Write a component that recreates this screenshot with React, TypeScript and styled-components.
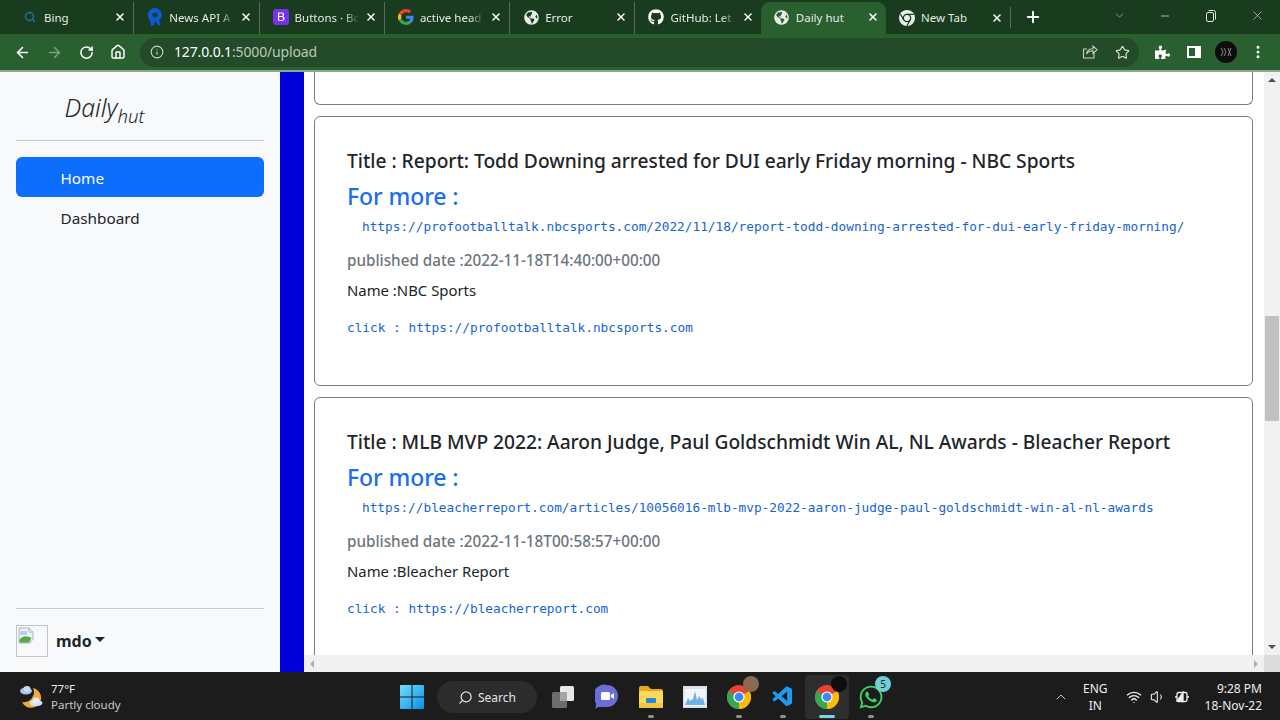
import React from "react";
import styled, { createGlobalStyle } from "styled-components";
import { ArrowLeft, ArrowRight, RotateCw, Home, Info, Star, X, Plus, ChevronDown, Minus, Search, ChevronUp, Wifi, Volume1, MoreVertical } from "lucide-react";
import { FaGithub, FaGlobeAmericas, FaPuzzlePiece, FaWhatsapp } from "react-icons/fa";
import { VscVscode } from "react-icons/vsc";

const Global = createGlobalStyle`
  html, body { margin: 0; padding: 0; width: 1280px; height: 720px; overflow: hidden; background: #fff; }
  * { box-sizing: border-box; }
  body { font-family: "Noto Sans", "Open Sans", sans-serif; }
`;

const Screen = styled.div`
  width: 1280px; height: 720px; display: flex; flex-direction: column; overflow: hidden;
`;
const TabStrip = styled.div`
  height: 34px; flex: none; background: #193b1e; display: flex; align-items: flex-end; padding-left: 9px; color: #fff;
`;
const Tab = styled.div<{ $active?: boolean }>`
  width: 125.3px; height: 32px; display: flex; align-items: center; padding: 0 7px 2px 13px; gap: 6px;
  font-size: 11.5px; color: #e4ebe4;
  background: ${p => (p.$active ? "#2a5f2f" : "transparent")};
  border-radius: ${p => (p.$active ? "9px 9px 0 0" : "0")};
  border-right: ${p => (p.$active ? "none" : "1px solid #54705a")};
  white-space: nowrap;
`;
const TabLast = styled(Tab)`
  height: 21px; margin-bottom: 6px; padding-bottom: 0;
`;
const TabPlain = styled(Tab)`
  border-right: none;
`;
const TabIcon = styled.span`
  width: 16px; height: 16px; flex: none; display: flex; align-items: center; justify-content: center;
`;
const TabTitle = styled.span<{ $fade?: boolean }>`
  flex: 1; min-width: 0; overflow: hidden; white-space: nowrap;
  ${p => p.$fade ? "-webkit-mask-image: linear-gradient(90deg,#000 78%,transparent 100%); mask-image: linear-gradient(90deg,#000 78%,transparent 100%);" : ""}
`;
const NewTab = styled.div`
  width: 44px; height: 32px; display: flex; align-items: center; justify-content: center; padding-bottom: 2px;
`;
const WindowControls = styled.div`
  margin-left: auto; height: 32px; display: flex; align-items: center; color: #dfe6df; padding-bottom: 5px;
`;
const WinBtn = styled.div`
  width: 46px; height: 30px; display: flex; align-items: center; justify-content: center;
`;
const Toolbar = styled.div`
  height: 36px; flex: none; background: #2a5f2f; display: flex; align-items: center; padding: 0 6px; color: #fff;
`;
const ToolBtn = styled.div<{ $dim?: boolean }>`
  width: 32px; height: 32px; display: flex; align-items: center; justify-content: center; flex: none;
  color: ${p => (p.$dim ? "#7f9f83" : "#fff")};
`;
const AddressBar = styled.div`
  flex: 1; height: 29px; margin: 0 7px 0 6px; border-radius: 15px; background: #234a29; display: flex; align-items: center; padding: 0 1px 0 8px;
`;
const UrlIcon = styled.div`
  width: 18px; display: flex; justify-content: center; color: #c5d2c6; margin-right: 8px;
`;
const Url = styled.div`
  flex: 1; font-size: 14px; color: #b9c9bb; letter-spacing: -0.15px; padding-bottom: 1px;
  b { font-weight: 400; color: #fff; }
`;
const ToolLine = styled.div`
  height: 2px; flex: none; background: #8aa88d;
`;
const Main = styled.div`
  flex: none; height: 600px; display: flex; overflow: hidden; background: #fff;
`;
const Sidebar = styled.aside`
  width: 280px; flex: none; background: #f8f9fa; padding: 0 16px 15px; display: flex; flex-direction: column; color: #212529;
`;
const Brand = styled.div`
  padding: 19px 0 0 48.5px; height: 69px; font-size: 24.8px; font-style: italic; font-weight: 300; line-height: 32px; border-bottom: 1.5px solid #c9cbcd;
  sub { font-size: 18.6px; vertical-align: -6px; line-height: 0; }
`;
const NavList = styled.nav`
  margin-top: 16px; display: flex; flex-direction: column;
`;
const NavItem = styled.div<{ $active?: boolean }>`
  height: 40px; border-radius: 6px; padding: 2px 0 0 44.5px; display: flex; align-items: center; font-size: 15.3px;
  background: ${p => (p.$active ? "#0d6efd" : "transparent")};
  color: ${p => (p.$active ? "#fff" : "#212529")};
`;
const SidebarFoot = styled.div`
  margin-top: auto; border-top: 1.5px solid #c9cbcd; padding-top: 16px; display: flex; align-items: center;
`;
const Avatar = styled.div`
  width: 32px; height: 32px; border: 1px solid #c4c4c4; margin-right: 8px; padding: 1px; display: flex; align-items: flex-start;
`;
const UserName = styled.div`
  font-weight: 700; font-size: 16px; display: flex; align-items: center; gap: 3px;
`;
const Caret = styled.span`
  width: 0; height: 0; border-left: 5.500px solid transparent; border-right: 5.500px solid transparent; border-top: 5.500px solid #212529; margin-bottom: 3px;
`;
const BlueBar = styled.div`
  width: 24px; flex: none; background: #0000d6;
`;
const ViewportCol = styled.div`
  flex: 1; min-width: 0; display: flex; flex-direction: column;
`;
const ViewportRow = styled.div`
  flex: 1; min-height: 0; display: flex;
`;
const Content = styled.main`
  flex: 1; min-width: 0; overflow: hidden; padding: 0 11px 0 10px; display: flex; flex-direction: column; gap: 10.5px;
`;
const CardStub = styled.div`
  height: 33px; flex: none; border: 1.5px solid #7d7d7d; border-top: none; border-radius: 0 0 6px 6px;
`;
const Card = styled.article`
  flex: none; border: 1.5px solid #7d7d7d; border-radius: 6px; padding: 32px 32px 49.5px; color: #212529;
`;
const Title = styled.h5`
  margin: 0; font-size: 19.2px; font-weight: 500; line-height: 24px; letter-spacing: -0.01px; white-space: nowrap;
`;
const More = styled.h4`
  margin: 9px 0 0; font-size: 23px; font-weight: 500; line-height: 29px; color: #1a6df0; letter-spacing: -0.1px;
`;
const MonoLink = styled.code`
  display: block; font-family: "DejaVu Sans Mono", "Liberation Mono", monospace; font-size: 12.78px; line-height: 17px; color: #1663d8; white-space: pre;
`;
const Href = styled(MonoLink)`
  margin: 7px 0 0 15px;
`;
const Published = styled.h6`
  margin: 13px 0 0; font-size: 15.25px; font-weight: 500; line-height: 24px; color: #6c757d;
`;
const Name = styled.p`
  margin: 6px 0 0; font-size: 14.9px; line-height: 24px; color: #212529;
`;
const Click = styled(MonoLink)`
  margin-top: 17px;
`;
const VScroll = styled.div`
  width: 16px; flex: none; background: #f1f1f1; display: flex; flex-direction: column; align-items: center;
`;
const Thumb = styled.div`
  width: 14px; height: 105px; margin-top: 244px; background: #c1c1c1; flex: none;
`;
const Arrow = styled.span<{ $dir: "up" | "down" | "left" | "right"; $dim?: boolean }>`
  width: 0; height: 0; flex: none;
  ${p => {
    const c = p.$dim ? "#b0b0b0" : "#505050";
    if (p.$dir === "up") return `border-left:4px solid transparent;border-right:4px solid transparent;border-bottom:4px solid ${c};`;
    if (p.$dir === "down") return `border-left:4px solid transparent;border-right:4px solid transparent;border-top:4px solid ${c};`;
    if (p.$dir === "left") return `border-top:4px solid transparent;border-bottom:4px solid transparent;border-right:4px solid ${c};`;
    return `border-top:4px solid transparent;border-bottom:4px solid transparent;border-left:4px solid ${c};`;
  }}
`;
const VUp = styled.div`
  height: 16px; flex: none; display: flex; align-items: center; justify-content: center; margin-bottom: -16px; width: 100%;
`;
const VDown = styled.div`
  height: 17px; margin-top: auto; display: flex; align-items: center; justify-content: center; width: 100%;
`;
const HScroll = styled.div`
  height: 17px; flex: none; background: #f1f1f1; display: flex; align-items: center;
`;
const HArrow = styled.div`
  width: 16px; height: 17px; display: flex; align-items: center; justify-content: center;
`;
const HSpacer = styled.div`
  flex: 1;
`;
const Corner = styled.div`
  width: 16px; height: 17px; background: #dcdcdc;
`;
const Taskbar = styled.footer`
  height: 48px; flex: none; background: #1c1c1c; color: #fff; display: flex; align-items: center; padding-top: 2px;
`;
const Weather = styled.div`
  width: 390px; flex: none; display: flex; align-items: center; padding-left: 19px; gap: 6px;
`;
const WeatherText = styled.div`
  font-size: 11.5px; line-height: 16px; color: #e8e8e8;
  span { display: block; color: #c8c8c8; }
`;
const TaskBtn = styled.div<{ $active?: boolean }>`
  width: 44px; height: 44px; flex: none; display: flex; align-items: center; justify-content: center; position: relative; border-radius: 4px;
  background: ${p => (p.$active ? "#2e2e2e" : "transparent")};
`;
const TaskPill = styled.div<{ $active?: boolean }>`
  position: absolute; bottom: 1px; left: 50%; transform: translateX(-50%); height: 3px; border-radius: 2px;
  width: ${p => (p.$active ? 16 : 6)}px; background: ${p => (p.$active ? "#76d6e8" : "#8e8e8e")};
`;
const SearchPill = styled.div`
  width: 100px; height: 32px; border-radius: 16px; background: #2c2c2c; margin: 0 4px 0 3px; display: flex; align-items: center; justify-content: center; gap: 5px;
  font-size: 12px; color: #e4e4e4; flex: none;
`;
const SearchGlyph = styled(Search)`
  transform: scaleX(-1);
`;
const Badge = styled.span<{ $bg: string; $color?: string }>`
  position: absolute; top: 1px; right: 2px; width: 16px; height: 16px; border-radius: 50%; background: ${p => p.$bg}; color: ${p => p.$color || "#222"};
  font-size: 10px; display: flex; align-items: center; justify-content: center; overflow: hidden;
`;
const Tray = styled.div`
  flex: 1; display: flex; align-items: center; justify-content: flex-end; padding-right: 18px; color: #f0f0f0;
`;
const TrayLang = styled.div`
  font-size: 12px; line-height: 17px; text-align: center; margin: 0 18px 0 14px; color: #eee;
`;
const TrayIcons = styled.div`
  display: flex; align-items: center; gap: 8px; margin-right: 15px;
`;
const Clock = styled.div`
  font-size: 12px; line-height: 17px; text-align: right; color: #eee;
`;

const Chrome = ({ size = 16 }: { size?: number }) => (
  <svg width={size} height={size} viewBox="0 0 24 24">
    <circle cx="12" cy="12" r="12" fill="#ea4335" />
    <path d="M12 12 L22.400 6 A12 12 0 0 1 12 24 Z" fill="#fbbc04" />
    <path d="M12 12 L12 24 A12 12 0 0 1 1.600 6 Z" fill="#34a853" />
    <circle cx="12" cy="12" r="5.600" fill="#fff" />
    <circle cx="12" cy="12" r="4.400" fill="#4285f4" />
  </svg>
);
const ChromeMono = () => (
  <svg width="16" height="16" viewBox="0 0 24 24">
    <circle cx="12" cy="12" r="12" fill="#e8eee8" />
    <circle cx="12" cy="12" r="6.500" fill="#193b1e" />
    <circle cx="12" cy="12" r="4.500" fill="#e8eee8" />
    <path d="M12 6.500h10M7.200 15l-5-8.600M16.800 15l-5 8.600" stroke="#193b1e" strokeWidth="1.800" fill="none" />
  </svg>
);
const GoogleG = () => (
  <svg width="16" height="16" viewBox="0 0 48 48">
    <path fill="#EA4335" d="M24 9.500c3.500 0 6.700 1.200 9.200 3.600l6.900-6.900C35.900 2.400 30.500 0 24 0 14.600 0 6.500 5.400 2.600 13.200l8 6.200C12.400 13.700 17.700 9.500 24 9.500z" />
    <path fill="#4285F4" d="M47 24.500c0-1.600-.1-3.100-.4-4.500H24v9h12.900c-.6 3-2.200 5.500-4.800 7.200l7.700 6C44.400 38 47 31.800 47 24.500z" />
    <path fill="#FBBC05" d="M10.500 28.600a14.500 14.500 0 0 1 0-9.200l-8-6.200a24 24 0 0 0 0 21.600l8-6.200z" />
    <path fill="#34A853" d="M24 48c6.500 0 11.900-2.100 15.900-5.800l-7.700-6c-2.200 1.500-4.900 2.300-8.200 2.300-6.300 0-11.600-4.200-13.500-9.900l-8 6.200C6.500 42.600 14.600 48 24 48z" />
  </svg>
);
const NewsLogo = () => (
  <svg width="16" height="20" viewBox="0 0 16 20">
    <path d="M8 1a7 7 0 0 0-5 12l1 5c.3 1.400 2.600 1.400 3-.2L7.500 15H9l2 3c1 1 3 0 2.500-1.500L12 13.500A7 7 0 0 0 8 1z" fill="#0b5ad9" />
    <circle cx="8" cy="8" r="2.600" fill="#193b1e" />
  </svg>
);
const BootstrapLogo = () => (
  <svg width="16" height="16" viewBox="0 0 16 16">
    <rect width="16" height="16" rx="3" fill="#7b2ff0" />
    <path d="M5 3.500h3.700c1.500 0 2.400.8 2.400 2 0 .9-.6 1.600-1.400 1.800 1.100.1 1.900.9 1.900 2.100 0 1.400-1 2.300-2.800 2.300H5zm1.200 1v2.600h1.900c1.100 0 1.700-.5 1.700-1.300s-.5-1.300-1.500-1.300zm0 3.500v3h2.200c1.200 0 1.800-.5 1.800-1.500s-.7-1.500-2-1.500z" fill="#fff" />
  </svg>
);
const BingMark = () => <Search size={12} color="#1d6fa8" strokeWidth={3} />;
const PanelIcon = () => (
  <svg width="16" height="16" viewBox="0 0 16 16"><path fillRule="evenodd" d="M1 2h14v12H1zM3 4v8h6V4z" fill="#fff" /></svg>
);
const ShareIcon = () => (
  <svg width="16" height="16" viewBox="0 0 16 16" fill="none" stroke="#c5d2c6" strokeWidth="1.100">
    <path d="M12 9v5H1.500V5H5" />
    <path d="M4.500 10c.5-3.500 3-5.300 6.500-5.300V2l4 3.700-4 3.700V6.800c-2.800 0-5 1-6.500 3.200z" />
  </svg>
);
const Restore = () => (
  <svg width="12" height="14" viewBox="0 0 12 14" fill="none" stroke="#dfe6df"><rect x="1.500" y="3.500" width="7" height="9" rx="1.500" /><path d="M3.500 1.500h5a2 2 0 0 1 2 2v7" /></svg>
);
const BrokenImage = () => (
  <svg width="17" height="17" viewBox="0 0 17 17">
    <path d="M1 1h10l4 4v7l-3 4H1z" fill="#eef3fb" stroke="#a9b4c4" />
    <path d="M11 1v4h4z" fill="#fff" stroke="#a9b4c4" />
    <path d="M2 4h7v4H2z" fill="#b7cdf2" />
    <path d="M1.500 15.500 v-3 q4-5 10-2.500 l2 1-2.500 4.500z" fill="#5aa845" />
  </svg>
);
const WeatherIcon = () => (
  <svg width="26" height="26" viewBox="0 0 26 26">
    <path d="M14 4a10 10 0 1 1-11 14 10 10 0 0 0 11-14z" fill="#f2a93b" />
    <ellipse cx="7" cy="7" rx="6" ry="3.500" fill="#a9c6e8" />
    <ellipse cx="8" cy="5" rx="3.500" ry="3" fill="#c7dcf2" />
    <ellipse cx="17" cy="19" rx="6.500" ry="3.300" fill="#cfe0f2" />
    <ellipse cx="17" cy="16.500" rx="3.500" ry="3" fill="#e2edf7" />
  </svg>
);
const WinLogo = () => (
  <svg width="24" height="24" viewBox="0 0 24 24">
    <defs><linearGradient id="w" x1="0" y1="0" x2="1" y2="1"><stop offset="0" stopColor="#6fe0fb" /><stop offset="1" stopColor="#0a8fe8" /></linearGradient></defs>
    <path fill="url(#w)" d="M0 1a1 1 0 0 1 1-1h10.500v11.500H0zM12.500 0H23a1 1 0 0 1 1 1v10.500H12.500zM0 12.500h11.500V24H1a1 1 0 0 1-1-1zM12.500 12.500H24V23a1 1 0 0 1-1 1H12.500z" />
  </svg>
);
const TaskView = () => (
  <svg width="24" height="24" viewBox="0 0 24 24">
    <rect x="9" y="1" width="14" height="15" rx="1.500" fill="#e8e8e8" />
    <rect x="1" y="7" width="15" height="16" rx="1.500" fill="#6d6d6d" />
    <rect x="9" y="7" width="7" height="9" fill="#a5a5a5" />
  </svg>
);
const Teams = () => (
  <svg width="24" height="26" viewBox="0 0 24 26">
    <path d="M12 1a11 11 0 0 1 0 22H3c-1.500 1-2.500 2-2.500 2s.5-3 .5-6A11 11 0 0 1 12 1z" fill="#6a6fd8" />
    <rect x="6" y="8" width="9" height="8" rx="1.500" fill="#fff" />
    <path d="M16 11l3-2v6l-3-2z" fill="#fff" />
  </svg>
);
const Explorer = () => (
  <svg width="26" height="24" viewBox="0 0 26 24">
    <path d="M1 3a2 2 0 0 1 2-2h7l3 3h10a2 2 0 0 1 2 2v3H1z" fill="#e6a91c" />
    <rect x="1" y="6" width="24" height="17" rx="1.500" fill="#fbd75b" />
    <rect x="8" y="13" width="10" height="5" rx="1" fill="#1e8cd8" />
    <rect x="1" y="18" width="24" height="5" rx="1" fill="#f3c73d" />
  </svg>
);
const Monitor = () => (
  <svg width="24" height="22" viewBox="0 0 24 22">
    <rect width="24" height="22" fill="#d8e2ec" />
    <rect x="1.500" y="3" width="21" height="17" fill="#f2f6fa" />
    <path d="M2 19l3-7 2 3 3-2 2-8 2 9 2-4 2 3 2-1 2 7z" fill="#6fb1e4" />
  </svg>
);

const tabs = [
  { icon: <BingMark />, title: "Bing" },
  { icon: <NewsLogo />, title: "News API A", fade: true },
  { icon: <BootstrapLogo />, title: "Buttons · Bc", fade: true },
  { icon: <GoogleG />, title: "active head", fade: true },
  { icon: <FaGlobeAmericas size={15} color="#e8eee8" />, title: "Error" },
  { icon: <FaGithub size={16} color="#fff" />, title: "GitHub: Let", fade: true },
];

const articles = [
  {
    title: "Title : Report: Todd Downing arrested for DUI early Friday morning - NBC Sports",
    href: "https://profootballtalk.nbcsports.com/2022/11/18/report-todd-downing-arrested-for-dui-early-friday-morning/",
    date: "published date :2022-11-18T14:40:00+00:00",
    name: "Name :NBC Sports",
    click: "click : https://profootballtalk.nbcsports.com",
  },
  {
    title: "Title : MLB MVP 2022: Aaron Judge, Paul Goldschmidt Win AL, NL Awards - Bleacher Report",
    href: "https://bleacherreport.com/articles/10056016-mlb-mvp-2022-aaron-judge-paul-goldschmidt-win-al-nl-awards",
    date: "published date :2022-11-18T00:58:57+00:00",
    name: "Name :Bleacher Report",
    click: "click : https://bleacherreport.com",
  },
];

export default function App() {
  return (
    <Screen>
      <Global />
      <TabStrip>
        {tabs.map((t, i) => (
          i === 5 ? (
            <TabPlain key={t.title}>
              <TabIcon>{t.icon}</TabIcon>
              <TabTitle $fade={t.fade}>{t.title}</TabTitle>
              <X size={12} strokeWidth={3} color="#fff" />
            </TabPlain>
          ) : (
            <Tab key={t.title}>
              <TabIcon>{t.icon}</TabIcon>
              <TabTitle $fade={t.fade}>{t.title}</TabTitle>
              <X size={12} strokeWidth={3} color="#fff" />
            </Tab>
          )
        ))}
        <TabPlain $active>
          <TabIcon><FaGlobeAmericas size={15} color="#e8eee8" /></TabIcon>
          <TabTitle>Daily hut</TabTitle>
          <X size={12} strokeWidth={3} color="#fff" />
        </TabPlain>
        <TabLast>
          <TabIcon><ChromeMono /></TabIcon>
          <TabTitle>New Tab</TabTitle>
          <X size={12} strokeWidth={3} color="#fff" />
        </TabLast>
        <NewTab><Plus size={18} strokeWidth={2.5} color="#fff" /></NewTab>
        <WindowControls>
          <WinBtn><ChevronDown size={13} strokeWidth={1} /></WinBtn>
          <WinBtn><Minus size={12} strokeWidth={1.5} /></WinBtn>
          <WinBtn><Restore /></WinBtn>
          <WinBtn><X size={15} strokeWidth={1} /></WinBtn>
        </WindowControls>
      </TabStrip>
      <Toolbar>
        <ToolBtn><ArrowLeft size={17} strokeWidth={2.2} /></ToolBtn>
        <ToolBtn $dim><ArrowRight size={17} strokeWidth={2.2} /></ToolBtn>
        <ToolBtn><RotateCw size={15} strokeWidth={2.4} /></ToolBtn>
        <ToolBtn><Home size={16} strokeWidth={2.2} /></ToolBtn>
        <AddressBar>
          <UrlIcon><Info size={14} /></UrlIcon>
          <Url><b>127.0.0.1</b>:5000/upload</Url>
          <ToolBtn $dim><ShareIcon /></ToolBtn>
          <ToolBtn><Star size={15} strokeWidth={1.8} color="#dfe6df" /></ToolBtn>
        </AddressBar>
        <ToolBtn><FaPuzzlePiece size={15} /></ToolBtn>
        <ToolBtn><PanelIcon /></ToolBtn>
        <ToolBtn>
          <svg width="22" height="22" viewBox="0 0 22 22"><circle cx="11" cy="11" r="11" fill="#0d0d0d" /><path d="M6 7l2 4-2 4M9 7l2 4-2 4M13 7l3 8M16 7l-3 8" stroke="#8a8a8a" fill="none" /></svg>
        </ToolBtn>
        <ToolBtn><MoreVertical size={16} strokeWidth={2.5} /></ToolBtn>
      </Toolbar>
      <ToolLine />
      <Main>
        <Sidebar>
          <Brand>Daily<sub>hut</sub></Brand>
          <NavList>
            <NavItem $active>Home</NavItem>
            <NavItem>Dashboard</NavItem>
          </NavList>
          <SidebarFoot>
            <Avatar><BrokenImage /></Avatar>
            <UserName>mdo<Caret /></UserName>
          </SidebarFoot>
        </Sidebar>
        <BlueBar />
        <ViewportCol>
          <ViewportRow>
            <Content>
              <CardStub />
              {articles.map(a => (
                <Card key={a.title}>
                  <Title>{a.title}</Title>
                  <More>For more :</More>
                  <Href>{a.href}</Href>
                  <Published>{a.date}</Published>
                  <Name>{a.name}</Name>
                  <Click>{a.click}</Click>
                </Card>
              ))}
            </Content>
            <VScroll>
              <VUp><Arrow $dir="up" /></VUp>
              <Thumb />
              <VDown><Arrow $dir="down" /></VDown>
            </VScroll>
          </ViewportRow>
          <HScroll>
            <HArrow><Arrow $dir="left" $dim /></HArrow>
            <HSpacer />
            <HArrow><Arrow $dir="right" $dim /></HArrow>
            <Corner />
          </HScroll>
        </ViewportCol>
      </Main>
      <Taskbar>
        <Weather>
          <WeatherIcon />
          <WeatherText>77°F<span>Partly cloudy</span></WeatherText>
        </Weather>
        <TaskBtn><WinLogo /></TaskBtn>
        <SearchPill><SearchGlyph size={15} />Search</SearchPill>
        <TaskBtn><TaskView /></TaskBtn>
        <TaskBtn><Teams /></TaskBtn>
        <TaskBtn><Explorer /><TaskPill /></TaskBtn>
        <TaskBtn><Monitor /></TaskBtn>
        <TaskBtn><Chrome size={24} /><Badge $bg="#8a6a50" /><TaskPill /></TaskBtn>
        <TaskBtn><VscVscode size={24} color="#1f9cf0" /><TaskPill /></TaskBtn>
        <TaskBtn $active><Chrome size={24} /><Badge $bg="#0d0d0d" /><TaskPill $active /></TaskBtn>
        <TaskBtn><FaWhatsapp size={26} color="#3fd265" /><Badge $bg="#6fd0d8">5</Badge><TaskPill /></TaskBtn>
        <Tray>
          <ChevronUp size={16} strokeWidth={1.2} />
          <TrayLang>ENG<br />IN</TrayLang>
          <TrayIcons>
            <Wifi size={16} strokeWidth={2} />
            <Volume1 size={16} strokeWidth={1.6} />
            <svg width="16" height="14" viewBox="0 0 16 14" fill="none" stroke="#f0f0f0" strokeWidth="1.300"><rect x="3" y="2.500" width="10" height="9" rx="1.500" /><path d="M1 7h2M13 7h2" /><path d="M3 11l6-8.500v9z" fill="#f0f0f0" /></svg>
          </TrayIcons>
          <Clock>9:28 PM<br />18-Nov-22</Clock>
        </Tray>
      </Taskbar>
    </Screen>
  );
}
